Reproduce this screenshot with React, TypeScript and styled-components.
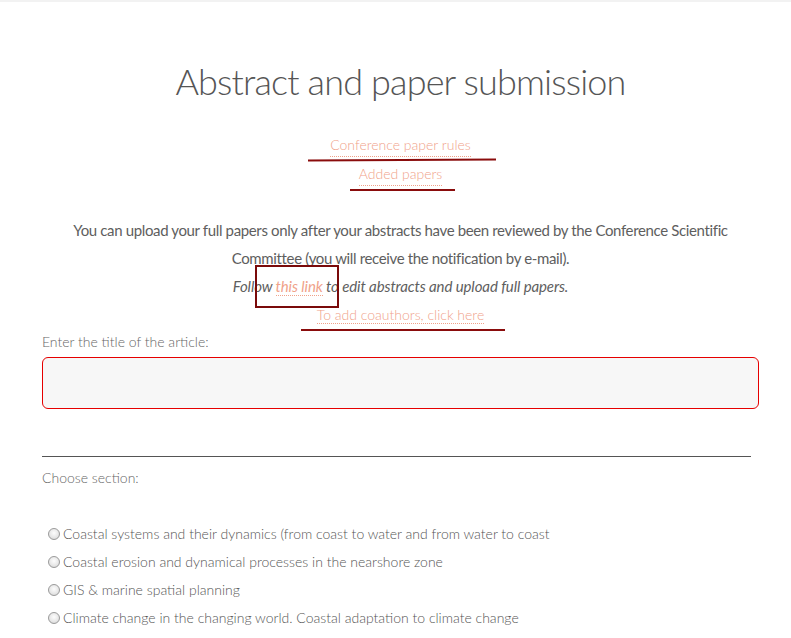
import React from "react"
import styled, { createGlobalStyle } from "styled-components"

const GlobalStyle = createGlobalStyle`
  html, body {
    margin: 0;
    padding: 0;
    background: #fff;
  }
  body {
    font-family: Lato, "Open Sans", Arial, sans-serif;
    color: #555;
    border-top: 2px solid #f2f2f2;
  }
`

const Page = styled.div`
  width: 717px;
  margin: 0 0 0 42px;
`

const Title = styled.h1`
  margin: 0;
  padding-top: 55px;
  font-size: 36px;
  font-weight: 300;
  line-height: 48px;
  text-align: center;
  color: #555;
  letter-spacing: -0.85px;
`

const LinkList = styled.div`
  margin-top: 29px;
  display: flex;
  flex-direction: column;
  align-items: center;
  gap: 6px;
`

const Link = styled.a`
  position: relative;
  font-size: 14px;
  font-weight: 300;
  line-height: 22px;
  color: #f0a28a;
  text-decoration: none;
  border-bottom: 1px dotted #f0a28a;
`

const Stroke = styled.span<{ $left: number; $right: number; $bottom: number; $tilt?: number }>`
  position: absolute;
  left: ${(p) => p.$left}px;
  right: ${(p) => p.$right}px;
  bottom: ${(p) => p.$bottom}px;
  height: 2px;
  background: #8a0c0c;
  transform: rotate(${(p) => p.$tilt ?? 0}deg);
`

const Frame = styled.span`
  position: absolute;
  left: -21px;
  right: -16px;
  top: -12px;
  bottom: -13px;
  border: 2px solid #7a0a0a;
`

const Notice = styled.div`
  margin: 30px auto 0;
  width: 680px;
  font-size: 15px;
  line-height: 28px;
  text-align: center;
  color: #5e5e5e;
`

const Lead = styled.div`
  letter-spacing: -0.36px;
`

const Italic = styled.div`
  font-style: italic;
  letter-spacing: -0.1px;
`

const InlineLink = styled(Link)`
  font-weight: 400;
  font-size: 15px;
  line-height: 20px;
`

const Label = styled.div`
  margin-top: 4px;
  font-size: 14px;
  font-weight: 300;
  line-height: 20px;
  color: #666;
`

const TitleInput = styled.input`
  display: block;
  box-sizing: border-box;
  width: 100%;
  height: 52px;
  margin-top: 5px;
  border: 1px solid #e60000;
  border-radius: 6px;
  background: #f7f7f7;
  outline: none;
`

const Rule = styled.div`
  margin-top: 47px;
  width: 709px;
  border-bottom: 1px solid #555;
`

const SectionLabel = styled(Label)`
  margin-top: 11px;
`

const Options = styled.div`
  margin-top: 36px;
  padding-left: 6px;
  display: flex;
  flex-direction: column;
  gap: 8px;
`

const Option = styled.label`
  display: flex;
  align-items: center;
  gap: 3px;
  font-size: 14px;
  font-weight: 300;
  line-height: 20px;
  color: #555;
`

const Radio = styled.span`
  box-sizing: border-box;
  width: 12px;
  height: 12px;
  border-radius: 50%;
  border: 1px solid #9a9a9a;
  background: radial-gradient(circle at 50% 40%, #fdfdfd 0%, #e8e8e8 55%, #cfcfcf 100%);
  flex-shrink: 0;
`

const sections = [
  "Coastal systems and their dynamics (from coast to water and from water to coast",
  "Coastal erosion and dynamical processes in the nearshore zone",
  "GIS & marine spatial planning",
  "Climate change in the changing world. Coastal adaptation to climate change",
]

const App: React.FC = () => {
  return (
    <>
      <GlobalStyle />
      <Page>
        <Title>Abstract and paper submission</Title>
        <LinkList>
          <Link href="#">
            Conference paper rules
            <Stroke $left={-22} $right={-25} $bottom={-5} $tilt={-0.3} />
          </Link>
          <Link href="#">
            Added papers
            <Stroke $left={-9} $right={-13} $bottom={-6} />
          </Link>
        </LinkList>
        <Notice>
          <Lead>
            You can upload your full papers only after your abstracts have been reviewed by the Conference Scientific
            Committee (you will receive the notification by e-mail).
          </Lead>
          <Italic>
            Follow{" "}
            <InlineLink href="#">
              this link
              <Frame />
            </InlineLink>{" "}
            to edit abstracts and upload full papers.
          </Italic>
          <div>
            <Link href="#">
              To add coauthors, click here
              <Stroke $left={-16} $right={-21} $bottom={-8} />
            </Link>
          </div>
        </Notice>
        <Label>Enter the title of the article:</Label>
        <TitleInput type="text" />
        <Rule />
        <SectionLabel>Choose section:</SectionLabel>
        <Options>
          {sections.map((s) => (
            <Option key={s}>
              <Radio />
              {s}
            </Option>
          ))}
        </Options>
      </Page>
    </>
  )
}

export default App
